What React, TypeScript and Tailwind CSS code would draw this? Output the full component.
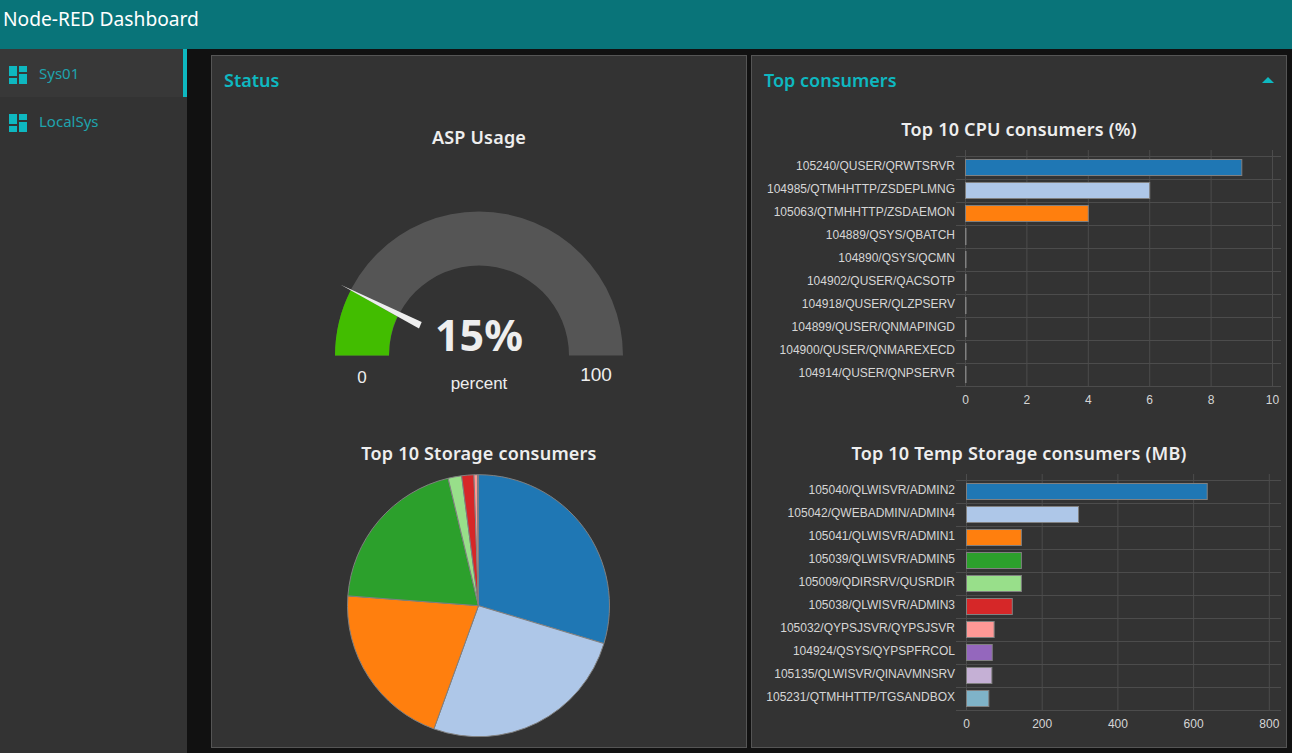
const uiFont = "font-['Noto_Sans',sans-serif]";

const dashboardIcon = "M3 13h8V3H3v10zm0 8h8v-6H3v6zm10 0h8V11h-8v10zm0-18v6h8V3h-8z";

type Row = { label: string; value: number; color: string };

const cpuRows: Row[] = [
  { label: "105240/QUSER/QRWTSRVR", value: 9, color: "#1f77b4" },
  { label: "104985/QTMHHTTP/ZSDEPLMNG", value: 6, color: "#aec7e8" },
  { label: "105063/QTMHHTTP/ZSDAEMON", value: 4, color: "#ff7f0e" },
  { label: "104889/QSYS/QBATCH", value: 0, color: "#2ca02c" },
  { label: "104890/QSYS/QCMN", value: 0, color: "#98df8a" },
  { label: "104902/QUSER/QACSOTP", value: 0, color: "#d62728" },
  { label: "104918/QUSER/QLZPSERV", value: 0, color: "#ff9896" },
  { label: "104899/QUSER/QNMAPINGD", value: 0, color: "#9467bd" },
  { label: "104900/QUSER/QNMAREXECD", value: 0, color: "#c5b0d5" },
  { label: "104914/QUSER/QNPSERVR", value: 0, color: "#7fb3c8" },
];

const tempRows: Row[] = [
  { label: "105040/QLWISVR/ADMIN2", value: 636, color: "#1f77b4" },
  { label: "105042/QWEBADMIN/ADMIN4", value: 296, color: "#aec7e8" },
  { label: "105041/QLWISVR/ADMIN1", value: 145, color: "#ff7f0e" },
  { label: "105039/QLWISVR/ADMIN5", value: 145, color: "#2ca02c" },
  { label: "105009/QDIRSRV/QUSRDIR", value: 145, color: "#98df8a" },
  { label: "105038/QLWISVR/ADMIN3", value: 121, color: "#d62728" },
  { label: "105032/QYPSJSVR/QYPSJSVR", value: 73, color: "#ff9896" },
  { label: "104924/QSYS/QYPSPFRCOL", value: 68, color: "#9467bd" },
  { label: "105135/QLWISVR/QINAVMNSRV", value: 67, color: "#c5b0d5" },
  { label: "105231/QTMHHTTP/TGSANDBOX", value: 59, color: "#7fb3c8" },
];

const pieSlices = [
  { end: 106.8, color: "#1f77b4" },
  { end: 199.9, color: "#aec7e8" },
  { end: 274.3, color: "#ff7f0e" },
  { end: 346.6, color: "#2ca02c" },
  { end: 352.6, color: "#98df8a" },
  { end: 358, color: "#d62728" },
  { end: 359.6, color: "#ff9896" },
  { end: 360, color: "#9467bd" },
];

function BarChart({ rows, x0, pxPerUnit, ticks, height, gridTop, plotTop }: {
  rows: Row[]; x0: number; pxPerUnit: number; ticks: number[]; height: number; gridTop: number; plotTop: number;
}) {
  const rowH = 23;
  const plotBottom = plotTop + rowH * rows.length;
  return (
    <svg width={534} height={height} className="block font-['Liberation_Sans',sans-serif]">
      {ticks.map((t) => (
        <line key={t} x1={x0 + t * pxPerUnit} x2={x0 + t * pxPerUnit} y1={gridTop} y2={plotBottom} stroke="#4c4c4c" />
      ))}
      {rows.map((_, i) => (
        <line key={i} x1={204} x2={529} y1={plotTop + i * rowH + 0.5} y2={plotTop + i * rowH + 0.5} stroke="#4c4c4c" />
      ))}
      <line x1={204} x2={529} y1={plotBottom + 0.5} y2={plotBottom + 0.5} stroke="#4c4c4c" />
      {rows.map((r, i) => (
        <g key={r.label}>
          <rect x={x0} y={plotTop + i * rowH + 3.5} width={Math.max(r.value * pxPerUnit, 0.5)} height={16} fill={r.color} stroke="#808080" />
          <text x={203} y={plotTop + i * rowH + 13.5} textAnchor="end" fontSize={12} fill="#d6d6d6">{r.label}</text>
        </g>
      ))}
      {ticks.map((t) => (
        <text key={t} x={x0 + t * pxPerUnit} y={plotBottom + 18} textAnchor="middle" fontSize={12} fill="#d6d6d6">{t}</text>
      ))}
    </svg>
  );
}

function polar(cx: number, cy: number, r: number, deg: number) {
  const a = (deg * Math.PI) / 180;
  return [cx + r * Math.sin(a), cy - r * Math.cos(a)];
}

function Pie() {
  const cx = 266.5;
  const cy = 139.7;
  const r = 131;
  let start = 0;
  return (
    <svg width={534} height={275} className="block">
      {pieSlices.map((s) => {
        const [x1, y1] = polar(cx, cy, r, start);
        const [x2, y2] = polar(cx, cy, r, s.end);
        const large = s.end - start > 180 ? 1 : 0;
        start = s.end;
        return (
          <path key={s.color} d={`M${cx} ${cy}L${x1} ${y1}A${r} ${r} 0 ${large} 1 ${x2} ${y2}Z`} fill={s.color} stroke="#808080" strokeWidth={1} />
        );
      })}
    </svg>
  );
}

function Gauge() {
  return (
    <svg width={534} height={250} className="block">
      <path d="M123 205.5A144 144 0 0 1 411 205.5H357A90 90 0 0 0 177 205.5Z" fill="#555555" />
      <path d="M123 205.5A144 144 0 0 1 138.9 139.9L185.3 166.6A90 90 0 0 0 177 205.5Z" fill="#42bd00" />
      <path d="M128.7 134.7L209.7 172L207 178.5Z" fill="#eeeeee" />
      <text x={267} y={201} textAnchor="middle" fontSize={43} fontWeight={700} fill="#eeeeee" className={uiFont}>15%</text>
      <g className="font-['Liberation_Sans',sans-serif]" fill="#eeeeee" textAnchor="middle">
        <text x={150} y={233} fontSize={17}>0</text>
        <text x={267} y={239} fontSize={17}>percent</text>
        <text x={384} y={231} fontSize={19}>100</text>
      </g>
    </svg>
  );
}

function ChartTitle({ children, className = "" }: { children: string; className?: string }) {
  return <h3 className={`h-6 text-center text-[18px] leading-[22px] font-semibold tracking-[0.2px] text-[#eeeeee] ${className}`}>{children}</h3>;
}

function NavItem({ label, active }: { label: string; active?: boolean }) {
  return (
    <div className={`flex h-12 items-center ${active ? "border-r-4 border-[#0eb8c0] bg-[#383838]" : ""}`}>
      <svg viewBox="0 0 24 24" width={24} height={24} fill="#0eb8c0" className="ml-1.5 mt-1 shrink-0">
        <path d={dashboardIcon} />
      </svg>
      <span className="ml-[9px] text-[15px] text-[#1fa3ad]">{label}</span>
    </div>
  );
}

export default function App() {
  return (
    <div className={`flex h-[753px] flex-col overflow-hidden bg-[#111111] ${uiFont}`}>
      <header className="flex h-[49px] shrink-0 bg-[#097479] pl-[3px] pt-[5px] text-[19.2px] leading-7 text-white">
        Node-RED Dashboard
      </header>

      <div className="flex min-h-0 flex-1">
        <aside className="w-[187px] shrink-0 bg-[#333333]">
          <NavItem label="Sys01" active />
          <NavItem label="LocalSys" />
        </aside>

        <main className="flex gap-1 pl-6 pt-1.5">
          <section className="h-[693px] w-[536px] border border-[#555555] bg-[#333333]">
            <div className="flex h-[50px] items-center px-3 pb-0.5 text-[18px] font-semibold text-[#0eb8c0]">Status</div>
            <ChartTitle className="mt-5">ASP Usage</ChartTitle>
            <Gauge />
            <ChartTitle className="mt-[42px]">Top 10 Storage consumers</ChartTitle>
            <Pie />
          </section>

          <section className="h-[693px] w-[536px] border border-[#555555] bg-[#333333]">
            <div className="flex h-[50px] items-center justify-between px-3 pb-0.5 text-[18px] font-semibold text-[#0eb8c0]">
              <span>Top consumers</span>
              <span className="h-0 w-0 border-x-[6px] border-b-[6px] border-x-transparent border-b-[#0eb8c0]" />
            </div>
            <ChartTitle className="mt-3">Top 10 CPU consumers (%)</ChartTitle>
            <BarChart rows={cpuRows} x0={213.5} pxPerUnit={30.7} ticks={[0, 2, 4, 6, 8, 10]} height={268} gridTop={8} plotTop={14} />
            <ChartTitle className="mt-8">Top 10 Temp Storage consumers (MB)</ChartTitle>
            <BarChart rows={tempRows} x0={214.5} pxPerUnit={0.3785} ticks={[0, 200, 400, 600, 800]} height={266} gridTop={8} plotTop={14} />
          </section>
        </main>
      </div>
    </div>
  );
}
